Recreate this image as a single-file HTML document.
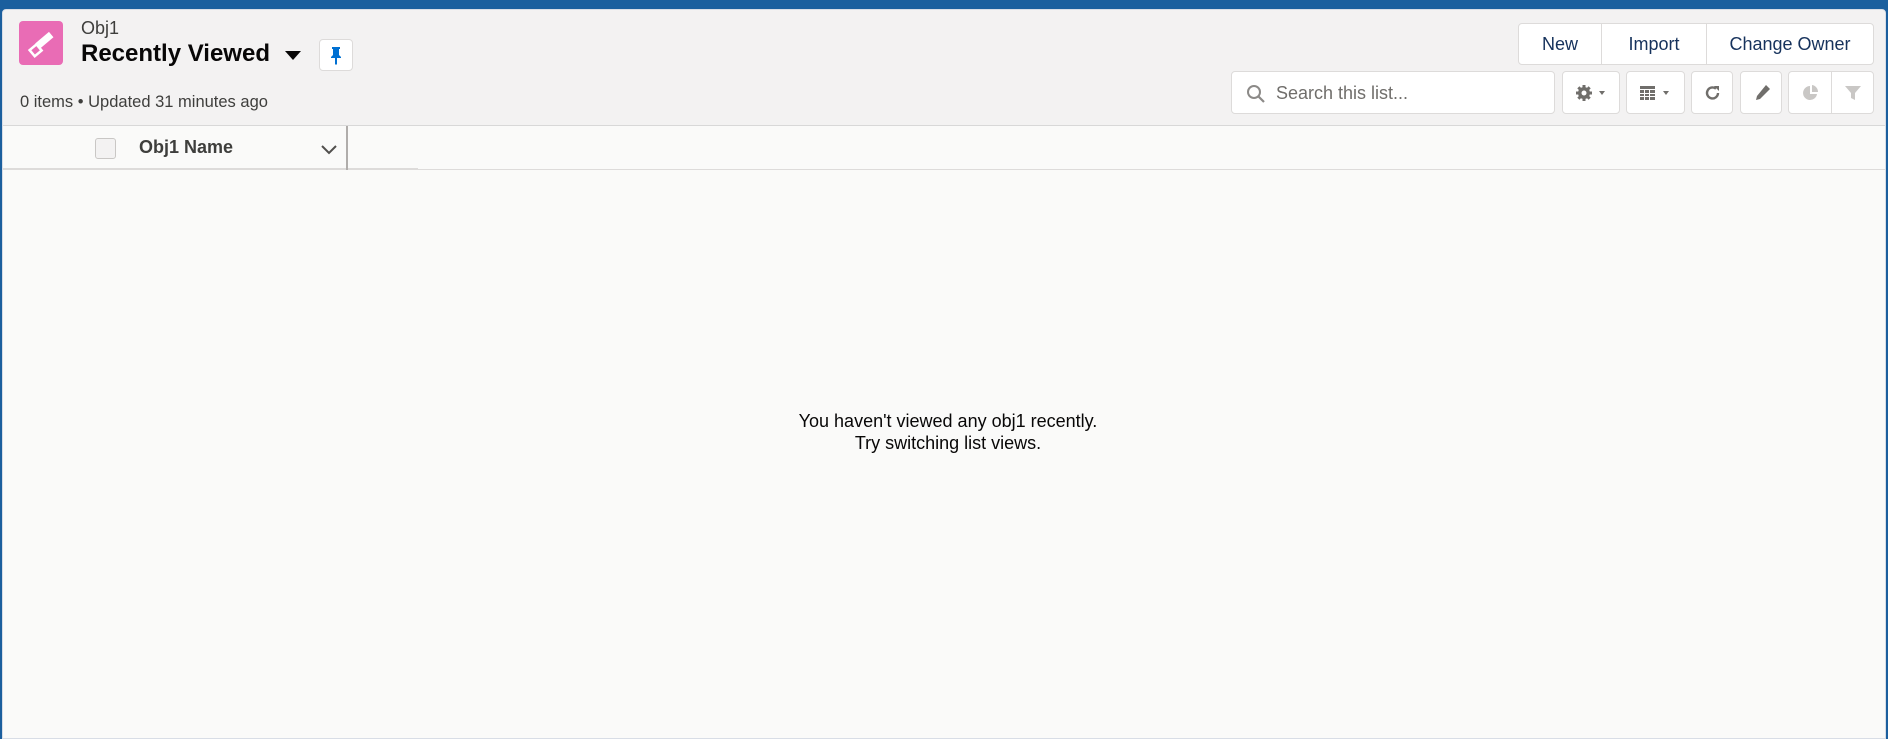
<!DOCTYPE html>
<html><head><meta charset="utf-8"><style>
*{box-sizing:border-box;margin:0;padding:0}
body{width:1888px;height:733px;overflow:hidden;background:#1b5f9e;font-family:"Liberation Sans",Arial,sans-serif;position:relative}
.card{position:absolute;left:2px;top:9px;width:1884px;height:730px;background:#fafaf9;border:1px solid #d8dde6;border-radius:4px 4px 0 0;overflow:hidden}
.hdr{position:absolute;left:0;top:0;width:100%;height:116px;background:#f3f2f2;border-bottom:1px solid #d8d8d8}
.abs{position:absolute}
.btn{position:absolute;background:#fff;border:1px solid #dddbda;border-radius:4px}
.txt{color:#16325c}
</style></head><body>
<div class="card">
 <div class="hdr">
  <div class="abs" style="left:16px;top:11px;width:44px;height:44px;background:#e96cb5;border-radius:4px">
   <svg width="44" height="44" viewBox="0 0 44 44"><rect x="22" y="10" width="7" height="18" fill="#fff" transform="rotate(50 25 19)"/><rect x="13" y="25" width="8" height="9" fill="none" stroke="#fff" stroke-width="2.5" transform="rotate(50 17 29)"/></svg>
  </div>
  <div class="abs" style="left:78px;top:8px;font-size:18px;color:#3e3e3c">Obj1</div>
  <div class="abs" style="left:78px;top:30px;font-size:24px;font-weight:bold;color:#080707">Recently Viewed</div>
  <svg class="abs" style="left:282px;top:41px" width="16" height="10"><polygon points="0,0 16,0 8,9" fill="#080707"/></svg>
  <div class="btn" style="left:316px;top:29px;width:34px;height:32px">
   <svg width="32" height="30" viewBox="0 0 32 30"><path d="M12 7h8v2h-1v6l2 2v1h-4v6l-1 1-1-1v-6h-4v-1l2-2V9h-1z" fill="#0070d2"/></svg>
  </div>
  <div class="abs" style="left:17px;top:83px;font-size:16.5px;color:#3e3e3c">0 items • Updated 31 minutes ago</div>

  <div class="btn" style="left:1515px;top:13px;width:356px;height:42px">
   <div class="abs txt" style="left:0;width:82px;top:10px;text-align:center;font-size:18px">New</div>
   <div class="abs" style="left:82px;top:0;width:1px;height:40px;background:#dddbda"></div>
   <div class="abs txt" style="left:83px;width:104px;top:10px;text-align:center;font-size:18px">Import</div>
   <div class="abs" style="left:187px;top:0;width:1px;height:40px;background:#dddbda"></div>
   <div class="abs txt" style="left:188px;width:166px;top:10px;text-align:center;font-size:18px">Change Owner</div>
  </div>

  <div class="btn" style="left:1228px;top:61px;width:324px;height:43px">
   <svg class="abs" style="left:14px;top:12px" width="20" height="20" viewBox="0 0 20 20"><circle cx="8" cy="8" r="6" fill="none" stroke="#8c8a88" stroke-width="2"/><line x1="12.5" y1="12.5" x2="18" y2="18" stroke="#8c8a88" stroke-width="2.2"/></svg>
   <div class="abs" style="left:44px;top:11px;font-size:18px;color:#706e6b">Search this list...</div>
  </div>
  <div class="btn" style="left:1559px;top:61px;width:58px;height:43px">
   <svg class="abs" style="left:12px;top:12px" width="36" height="18" viewBox="0 0 36 18"><g fill="#706e6b"><circle cx="9" cy="9" r="6"/><rect x="7.5" y="1" width="3" height="16"/><rect x="1" y="7.5" width="16" height="3"/><rect x="7.5" y="1" width="3" height="16" transform="rotate(45 9 9)"/><rect x="7.5" y="1" width="3" height="16" transform="rotate(-45 9 9)"/></g><circle cx="9" cy="9" r="2.5" fill="#fff"/><polygon points="24,7 30,7 27,11" fill="#706e6b"/></svg>
  </div>
  <div class="btn" style="left:1623px;top:61px;width:59px;height:43px">
   <svg class="abs" style="left:12px;top:12px" width="36" height="18" viewBox="0 0 36 18"><g fill="#706e6b"><rect x="1" y="2" width="15" height="3"/><rect x="1" y="6" width="15" height="10"/></g><g stroke="#fff" stroke-width="1"><line x1="1" y1="9.5" x2="16" y2="9.5"/><line x1="1" y1="12.5" x2="16" y2="12.5"/><line x1="5.5" y1="6" x2="5.5" y2="16"/><line x1="10.5" y1="6" x2="10.5" y2="16"/></g><polygon points="24,7 30,7 27,11" fill="#706e6b"/></svg>
  </div>
  <div class="btn" style="left:1688px;top:61px;width:42px;height:43px">
   <svg class="abs" style="left:11px;top:11px" width="20" height="20" viewBox="0 0 20 20"><path d="M15 10a5.5 5.5 0 1 1-2-4.3" fill="none" stroke="#706e6b" stroke-width="2.4"/><polygon points="11,3 16,3 16,8" fill="#706e6b"/></svg>
  </div>
  <div class="btn" style="left:1737px;top:61px;width:42px;height:43px">
   <svg class="abs" style="left:11px;top:11px" width="20" height="20" viewBox="0 0 20 20"><path d="M14 2l4 4-10 10-4 1 1-4z" fill="#706e6b"/></svg>
  </div>
  <div class="btn" style="left:1785px;top:61px;width:86px;height:43px">
   <svg class="abs" style="left:12px;top:11px" width="20" height="20" viewBox="0 0 20 20"><path d="M9 3a7 7 0 1 0 7 8H9z" fill="#c9c7c5"/><path d="M11 2a7 7 0 0 1 6 7h-6z" fill="#c9c7c5"/></svg>
   <div class="abs" style="left:42px;top:0;width:1px;height:41px;background:#dddbda"></div>
   <svg class="abs" style="left:54px;top:11px" width="20" height="20" viewBox="0 0 20 20"><path d="M2 3h16l-6 7v7l-4-2v-5z" fill="#c9c7c5"/></svg>
  </div>
 </div>

 <div class="abs" style="left:0;top:116px;width:100%;height:44px;background:#fafaf9;border-bottom:1px solid #dddbda"></div>
 <div class="abs" style="left:0;top:158px;width:415px;height:2px;background:#dddbda"></div>
 <div class="abs" style="left:92px;top:128px;width:21px;height:21px;background:#f3f2f2;border:1px solid #c9c7c5;border-radius:3px"></div>
 <div class="abs" style="left:136px;top:127px;font-size:18px;font-weight:bold;color:#3e3e3c">Obj1 Name</div>
 <svg class="abs" style="left:317px;top:133px" width="18" height="12" viewBox="0 0 18 12"><path d="M2 3l7 7 7-7" fill="none" stroke="#514f4d" stroke-width="2"/></svg>
 <div class="abs" style="left:343px;top:116px;width:2px;height:44px;background:#b0adab"></div>

 <div class="abs" style="left:0;width:100%;top:400px;text-align:center;font-size:18px;line-height:22px;color:#080707;padding-left:8px">You haven't viewed any obj1 recently.<br>Try switching list views.</div>
</div>
</body></html>
